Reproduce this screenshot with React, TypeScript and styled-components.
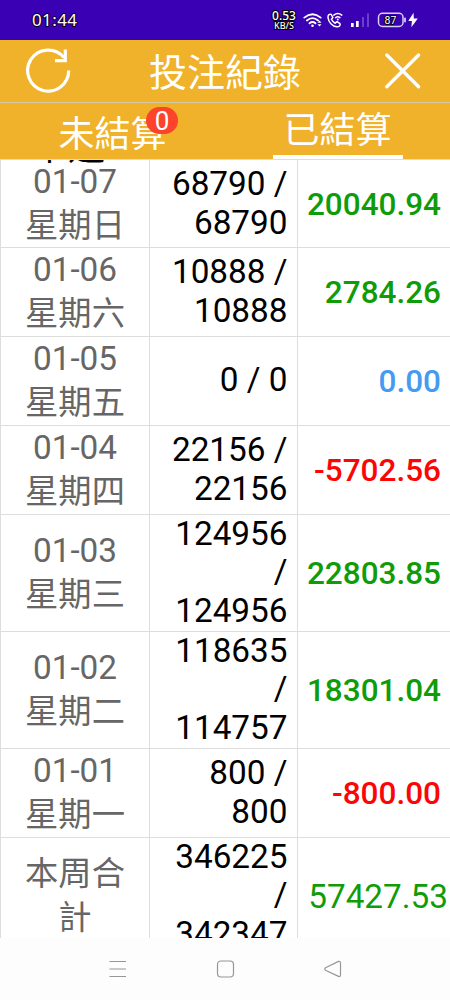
import React from "react";
import styled, { createGlobalStyle } from "styled-components";

const GlobalStyle = createGlobalStyle`
  * { box-sizing: border-box; }
  body { margin: 0; background: #fff; }
`;

const Screen = styled.div`
  width: 450px;
  height: 1000px;
  display: flex;
  flex-direction: column;
  overflow: hidden;
  background: #fff;
  font-family: Roboto, "Noto Sans CJK TC", sans-serif;
`;

const StatusBar = styled.div`
  flex: none;
  height: 40px;
  display: flex;
  align-items: center;
  justify-content: space-between;
  padding: 0 31px 0 32px;
  background: #3a00b4;
  color: #fff;
`;

const Clock = styled.span`
  font: 400 17px/20px "Noto Sans", sans-serif;
  letter-spacing: 0.4px;
  -webkit-text-stroke: 2px #0a0020;
  paint-order: stroke fill;
`;

const StatusIcons = styled.div`
  display: flex;
  align-items: center;
`;

const Speed = styled.div`
  width: 26px;
  display: flex;
  flex-direction: column;
  align-items: center;
  white-space: nowrap;
  -webkit-text-stroke: 2px #000;
  paint-order: stroke fill;
  font-family: "Noto Sans", sans-serif;
  font-weight: 500;
`;

const SpeedValue = styled.span`
  font-size: 12px;
  line-height: 10px;
`;

const SpeedUnit = styled.span`
  font-size: 9px;
  line-height: 9px;
`;

const Header = styled.header`
  flex: none;
  height: 63px;
  display: flex;
  align-items: center;
  justify-content: space-between;
  padding: 0 28px 0 24px;
  background: #efb22a;
  border-bottom: 1px solid #d5c9a4;
`;

const Title = styled.h1`
  margin: 0 6px 0 0;
  padding-top: 4px;
  color: #fff;
  font-size: 38px;
  line-height: 46px;
  font-weight: 400;
`;

const Tabs = styled.nav`
  flex: none;
  height: 56px;
  display: grid;
  grid-template-columns: 1fr 1fr;
  justify-items: center;
  background: #efb22a;
`;

const Tab = styled.div<{ $active?: boolean }>`
  position: relative;
  height: 56px;
  width: ${(p) => (p.$active ? "130px" : "109px")};
  padding-top: ${(p) => (p.$active ? "3px" : "7px")};
  border-bottom: ${(p) => (p.$active ? "4px solid #fff" : "none")};
  color: #fff;
  font-size: 36px;
  line-height: 50px;
  font-weight: 400;
  text-align: center;
  white-space: nowrap;
`;

const Badge = styled.span`
  position: absolute;
  left: 88px;
  top: 4px;
  width: 32px;
  height: 27px;
  border-radius: 14px;
  background: #fc432b;
  font-size: 26px;
  line-height: 28px;
  font-weight: 400;
`;

const Table = styled.main`
  position: relative;
  flex: none;
  height: 779px;
  overflow: hidden;
  border-left: 1px solid #ddd;
  border-top: 1px solid #ddd;
`;

const ScrolledHeading = styled.div`
  position: absolute;
  left: 30px;
  top: -34px;
  font-size: 37px;
  line-height: 44px;
  font-weight: 400;
  color: #000;
`;

const Row = styled.div<{ $height: number }>`
  height: ${(p) => p.$height}px;
  display: grid;
  grid-template-columns: 149px 148px 1fr;
  border-bottom: 1px solid #ddd;
`;

const Cell = styled.div`
  display: flex;
  flex-direction: column;
  justify-content: center;
  border-right: 1px solid #ddd;
`;

const DayCell = styled(Cell)`
  align-items: center;
  color: #666;
  font-size: 33.3px;
  line-height: 44px;
  font-weight: 400;
`;

const AmountCell = styled(Cell)`
  align-items: flex-end;
  padding-right: 9.5px;
  padding-bottom: 1px;
  color: #000;
  font-size: 33.3px;
  line-height: 38.3px;
`;

const ResultCell = styled(Cell)<{ $color: string; $total?: boolean }>`
  align-items: flex-end;
  border-right: none;
  padding-right: ${(p) => (p.$total ? "2px" : "9px")};
  color: ${(p) => p.$color};
  font-size: ${(p) => (p.$total ? "33.3px" : "31.5px")};
  font-weight: ${(p) => (p.$total ? 400 : 500)};
`;

const NavBar = styled.footer`
  flex: 1;
  display: flex;
  align-items: center;
  justify-content: center;
  background: #fdfdfd;
`;

const GREEN = "#109c08";
const RED = "#fb0505";
const BLUE = "#459bf1";

interface BetRecord {
  day: string[];
  amount: string[];
  result: string;
  color: string;
  height: number;
  total?: boolean;
}

const records: BetRecord[] = [
  { day: ["01-07", "星期日"], amount: ["68790 /", "68790"], result: "20040.94", color: GREEN, height: 88 },
  { day: ["01-06", "星期六"], amount: ["10888 /", "10888"], result: "2784.26", color: GREEN, height: 89 },
  { day: ["01-05", "星期五"], amount: ["0 / 0"], result: "0.00", color: BLUE, height: 89 },
  { day: ["01-04", "星期四"], amount: ["22156 /", "22156"], result: "-5702.56", color: RED, height: 89 },
  { day: ["01-03", "星期三"], amount: ["124956", "/", "124956"], result: "22803.85", color: GREEN, height: 117 },
  { day: ["01-02", "星期二"], amount: ["118635", "/", "114757"], result: "18301.04", color: GREEN, height: 117 },
  { day: ["01-01", "星期一"], amount: ["800 /", "800"], result: "-800.00", color: RED, height: 89 },
  { day: ["本周合", "計"], amount: ["346225", "/", "342347"], result: "57427.53", color: GREEN, height: 117, total: true },
];

const SystemIcons = () => (
  <svg width="116" height="20" viewBox="0 0 116 20" fill="none" stroke="#fff" strokeLinecap="round">
    <g strokeWidth="1.800">
      <path d="M7.300 7.600Q15.500 .8 23.700 7.600" />
      <path d="M9.900 10.500Q15.500 5.800 21.100 10.500" />
      <path d="M12.500 13.300Q15.500 10.800 18.500 13.300" />
    </g>
    <circle cx="15.500" cy="15.700" r="1.300" fill="#fff" stroke="none" />
    <path d="M20.500 12.700l2-2.200 2 2.200zM20.500 14.200l2 2.200 2-2.200z" fill="#fff" stroke="none" />
    <path d="M34.200 4.400c-1.800-.9-3.500 1-3.200 3.200.6 4.600 4.200 8.600 8.800 9.200 2.200.3 4-1.600 3.200-3.100l-3-2-1.800 1.500c-1.700-.8-3-2.200-3.800-3.900l1.500-1.800z" strokeWidth="1.500" strokeLinejoin="round" />
    <path d="M36.800 5.100q4-3.200 8 0M38.700 7.600q2.100-1.600 4.200 0" strokeWidth="1.500" />
    <circle cx="40.800" cy="9.600" r="1" fill="#fff" stroke="none" />
    <g fill="#fff" stroke="none">
      <rect x="54" y="13" width="2.700" height="4" />
      <rect x="59" y="11" width="2.700" height="6" />
      <rect x="65" y="7" width="2" height="10" opacity=".25" />
      <rect x="70" y="3.500" width="2" height="13.500" opacity=".25" />
    </g>
    <rect x="81.500" y="3.300" width="24.500" height="13.200" rx="4" strokeWidth="1.500" stroke="#d8cdf5" />
    <path d="M108 8.500v3" stroke="#d8cdf5" strokeWidth="1.800" />
    <text x="93.500" y="13.700" textAnchor="middle" fontFamily="Roboto" fontSize="10.500" fontWeight="400" fill="#fff" stroke="#0a0020" strokeWidth="2" paintOrder="stroke">87</text>
  </svg>
);

const Bolt = styled.svg`
  margin-left: -6px;
`;

export default function App() {
  return (
    <Screen>
      <GlobalStyle />
      <StatusBar>
        <Clock>01:44</Clock>
        <StatusIcons>
          <Speed>
            <SpeedValue>0.53</SpeedValue>
            <SpeedUnit>KB/S</SpeedUnit>
          </Speed>
          <SystemIcons />
          <Bolt width="12" height="16" viewBox="0 0 12 16">
            <path d="M6.500 .8L1.300 9h3.600L4.400 15.300 10.800 6.500H6.800z" fill="#fff" />
          </Bolt>
        </StatusIcons>
      </StatusBar>
      <Header>
        <svg width="50" height="50" viewBox="0 0 50 50" fill="none" stroke="#fff" strokeWidth="3.200">
          <path d="M44.700 24.500A20.500 20.500 0 1 1 40 11.500" />
          <path d="M41.300 3.500V14.700H31" />
        </svg>
        <Title>投注紀錄</Title>
        <svg width="40" height="40" viewBox="0 0 40 40" stroke="#fff" strokeWidth="3.400" strokeLinecap="round">
          <path d="M4.800 4L36.600 35.800M36.600 4L4.800 35.800" />
        </svg>
      </Header>
      <Tabs>
        <Tab>
          未結算<Badge>0</Badge>
        </Tab>
        <Tab $active>已結算</Tab>
      </Tabs>
      <Table>
        <ScrolledHeading>本週</ScrolledHeading>
        {records.map((r) => (
          <Row key={r.day[0]} $height={r.height}>
            <DayCell>
              {r.day.map((line) => (
                <span key={line}>{line}</span>
              ))}
            </DayCell>
            <AmountCell>
              {r.amount.map((line, i) => (
                <span key={i}>{line}</span>
              ))}
            </AmountCell>
            <ResultCell $color={r.color} $total={r.total}>
              {r.result}
            </ResultCell>
          </Row>
        ))}
      </Table>
      <NavBar>
        <svg width="240" height="24" viewBox="0 0 240 24" fill="none" stroke="#969696" strokeWidth="1.200">
          <path d="M4.500 4.500H21M4.500 12H21M4.500 19.500H21" />
          <rect x="112.500" y="4" width="16" height="16" rx="3.500" />
          <path d="M220.500 10.800L233.500 4.400Q235.500 4 235.500 6V18Q235.500 20 233.500 19.400L220.500 13.200Q219 12 220.500 10.800Z" />
        </svg>
      </NavBar>
    </Screen>
  );
}
